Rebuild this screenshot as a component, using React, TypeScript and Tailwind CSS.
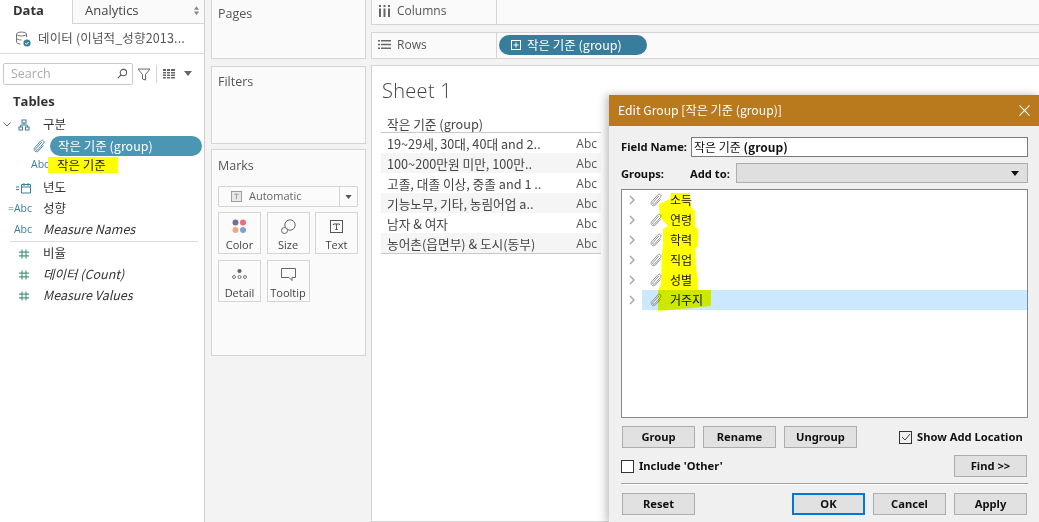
import React from "react";

const kr = "font-['Noto_Sans_CJK_KR','Noto_Sans',sans-serif]";
const LATIN = "font-['Open_Sans','Noto_Sans_CJK_KR',sans-serif]";
const DLG = "font-['Noto_Sans','Noto_Sans_CJK_KR',sans-serif]";

function Clip({ className = "", w = 1.1 }: { className?: string; w?: number }) {
  return (
    <svg viewBox="0 0 14 14" width="14" height="14" fill="none" stroke="currentColor" strokeWidth={w} className={className}>
      <path d="M9.8 3 4 9.6c-.9 1.1.5 2.5 1.5 1.5l6-6.8c1.6-1.9-1-4.2-2.7-2.4L2.7 8.7c-2 2.6 1.500 5.600 3.800 3.200l5-5.600" />
    </svg>
  );
}

function Hash() {
  return (
    <svg viewBox="0 0 12 12" width="12" height="12" stroke="#4f9a7d" strokeWidth="1.2" fill="none">
      <path d="M4 1.500v9M8 1.500v9M1 4.200h10M1 7.800h10" />
    </svg>
  );
}

function FieldRow({ icon, label, italic }: { icon: React.ReactNode; label: string; italic?: boolean }) {
  return (
    <div className="flex items-center h-[21px]">
      <div className="w-[33px] flex justify-end pr-[1px] text-[10.5px] text-[#3c7d9c]">{icon}</div>
      <span className={`ml-[10px] text-[12.5px] text-[#333] ${italic ? "italic" : ""}`}>{label}</span>
    </div>
  );
}

function MarkBtn({ label, children }: { label: string; children: React.ReactNode }) {
  return (
    <div className="w-[43px] h-[42px] border border-[#d4d4d4] bg-[#fbfbfb] flex flex-col items-center justify-between pt-[6px]">
      <div className="h-[15px] flex items-center justify-center">{children}</div>
      <span className="text-[11px] text-[#444] leading-[16px] whitespace-nowrap">{label}</span>
    </div>
  );
}

const RowsData = [
  "19~29세, 30대, 40대 and 2..",
  "100~200만원 미만, 100만..",
  "고졸, 대졸 이상, 중졸 and 1 ..",
  "기능노무, 기타, 농림어업 a..",
  "남자 & 여자",
  "농어촌(읍면부) & 도시(동부)",
];

const Groups = ["소득", "연령", "학력", "직업", "성별", "거주지"];

function DlgBtn({ label, cls = "" }: { label: string; cls?: string }) {
  return (
    <div className={`w-[73px] h-[22px] bg-[#e1e1e1] border border-[#adadad] flex items-center justify-center text-[11.2px] font-bold text-[#111] ${cls}`}>
      {label}
    </div>
  );
}

export default function App() {
  return (
    <div className={`relative w-[1039px] h-[522px] overflow-hidden flex bg-[#f3f3f3] ${LATIN}`}>
      {/* Sidebar */}
      <aside className="w-[205px] h-full shrink-0 bg-white border-r border-[#cfcfcf] flex flex-col">
        <div className="flex h-[24px] shrink-0">
          <div className="w-[72px] flex items-center pb-[2px] pl-[13px] text-[13px] font-bold text-[#333]">Data</div>
          <div className="flex-1 flex items-center justify-between pb-[2px] pl-[12px] pr-[4px] border-l border-b border-[#d4d4d4] bg-[#fafafa] text-[13px] text-[#444]">
            <span>Analytics</span>
            <svg viewBox="0 0 8 10" width="7" height="9" fill="#888"><path d="M4 0 7 4H1zM4 10 1 6h6z" /></svg>
          </div>
        </div>
        <div className="h-[30px] shrink-0 border-b border-[#dcdcdc] flex items-center pl-[14px]">
          <svg viewBox="0 0 18 18" width="18" height="18" fill="none" stroke="#777" strokeWidth="1">
            <ellipse cx="7.500" cy="4" rx="5" ry="2" />
            <path d="M2.500 4v8c0 1.100 2 2 4 2M12.500 4v3M2.500 8c0 1.100 2 2 5 2" />
            <circle cx="13" cy="13" r="3.600" fill="#3c7d9c" stroke="none" />
            <path d="m11.300 13 1.200 1.300 2.100-2.300" stroke="#fff" />
          </svg>
          <span className={`ml-[6px] text-[12.5px] text-[#555] tracking-[0.15px] whitespace-nowrap ${kr}`}>데이터 (이념적_성향2013...</span>
        </div>
        <div className="flex items-center mt-[8px] pl-[3px] h-[23px] shrink-0">
          <div className="w-[130px] h-[22px] border border-[#c9c9c9] rounded-[2px] flex items-center justify-between pl-[7px] pr-[4px] text-[12.5px] text-[#aaa]">
            <span className="pt-[1px]">Search</span>
            <svg viewBox="0 0 12 12" width="11" height="11" fill="none" stroke="#555" strokeWidth="1.100"><circle cx="7" cy="5" r="3.500" /><path d="M4.500 7.500 1 11" /></svg>
          </div>
          <svg viewBox="0 0 14 14" width="14" height="14" fill="none" stroke="#666" strokeWidth="1" className="ml-[4px]"><path d="M1 2h12L8.500 7.500V13L5.500 12V7.500z" /></svg>
          <div className="w-px h-[18px] bg-[#d4d4d4] ml-[5px]" />
          <svg viewBox="0 0 13 10" width="13" height="10" fill="#666" className="ml-[6px]">
            <path d="M0 0h3v2H0zM4 0h3v2H4zM8 0h4v2H8zM0 3h3v1.500H0zM4 3h3v1.500H4zM8 3h4v1.500H8zM0 5.500h3V7H0zM4 5.500h3V7H4zM8 5.500h4V7H8zM0 8h3v1.500H0zM4 8h3v1.500H4zM8 8h4v1.500H8z" />
          </svg>
          <svg viewBox="0 0 8 5" width="8" height="5" fill="#666" className="ml-[8px]"><path d="M0 0h8L4 5z" /></svg>
        </div>
        <div className="mt-[7px] pl-[13px] text-[13px] font-bold text-[#333] leading-[18px]">Tables</div>
        <div className={`mt-[4px] ${kr}`}>
          <div className="flex items-center h-[21px] relative">
            <svg viewBox="0 0 8 5" width="8" height="5" fill="none" stroke="#666" className="ml-[3px]"><path d="m.5.500 3.500 3.500 3.500-3.500" /></svg>
            <svg viewBox="0 0 12 12" width="12" height="12" fill="none" stroke="#3c7d9c" className="ml-[7px]"><rect x="4" y="1" width="4" height="3" /><rect x="1" y="8" width="3.500" height="3" /><rect x="7.500" y="8" width="3.500" height="3" /><path d="M6 4v2M2.700 8V6h6.600v2" /></svg>
            <span className="ml-[13px] text-[12.5px] text-[#333]">구분</span>
          </div>
          <div className="flex items-center h-[20px] mt-[1px]">
            <Clip className="ml-[32px] text-[#3c7d9c]" w={0.9} />
            <div className="ml-[4px] w-[152px] h-[20px] rounded-full bg-[#4b96b3] flex items-center pl-[8px] text-[12.5px] text-white whitespace-nowrap">작은 기준 (group)</div>
          </div>
          <div className="flex items-center h-[18px] mb-[3px]">
            <span className="ml-[31px] w-[15px] text-[10.5px] text-[#3c7d9c] font-['Open_Sans']">Abc</span>
            <span className="ml-[2px] w-[70px] h-[16px] bg-[#ffff00] pl-[9px] text-[12.5px] text-[#222] leading-[16px] whitespace-nowrap">작은 기준</span>
          </div>
          <FieldRow icon={<svg viewBox="0 0 16 12" width="16" height="12" fill="none" stroke="#3c7d9c"><path d="M0 5h3M0 7.500h3M5.500 2.500h9v8.500h-9zM5.500 5h9M8 1v3M12 1v3" /></svg>} label="년도" />
          <FieldRow icon={<span className="font-['Open_Sans'] whitespace-nowrap">=Abc</span>} label="성향" />
          <FieldRow icon={<span className="font-['Open_Sans']">Abc</span>} label="Measure Names" italic />
          <div className="h-px bg-[#dedede] ml-[10px] mr-[6px] mt-[1px] mb-[1px]" />
          <FieldRow icon={<span className="pr-[2px] flex"><Hash /></span>} label="비율" />
          <FieldRow icon={<span className="pr-[2px] flex"><Hash /></span>} label="데이터 (Count)" italic />
          <FieldRow icon={<span className="pr-[2px] flex"><Hash /></span>} label="Measure Values" italic />
        </div>
      </aside>

      {/* Cards column */}
      <div className="w-[166px] shrink-0 pl-[6px] pr-[5px] flex flex-col">
        <section className="h-[59px] border border-t-0 border-[#d4d4d4] bg-[#fafafa] pl-[6px] pt-[5px] text-[12.5px] text-[#555]">Pages</section>
        <section className="mt-[7px] h-[78px] border border-[#d4d4d4] bg-[#fafafa] pl-[6px] pt-[6px] text-[12.5px] text-[#555]">Filters</section>
        <section className="mt-[5px] h-[207px] border border-[#d4d4d4] bg-[#fafafa] pl-[6px] pt-[7px] text-[#555]">
          <div className="text-[12.5px] leading-[17px]">Marks</div>
          <div className="mt-[12px] w-[140px] h-[21px] border border-[#d4d4d4] flex items-center rounded-[1px] bg-[#fbfbfb]">
            <svg viewBox="0 0 12 12" width="11" height="11" fill="none" stroke="#999" className="ml-[12px]"><rect x="0.500" y="0.500" width="11" height="11" fill="#e8e8e8" /><path d="M3.500 3.500h5M6 3.500V9" /></svg>
            <span className="ml-[7px] flex-1 text-[11px] text-[#666]">Automatic</span>
            <div className="w-[18px] h-full border-l border-[#d4d4d4] flex items-center justify-center"><svg viewBox="0 0 8 5" width="7" height="4" fill="#555"><path d="M0 0h8L4 5z" /></svg></div>
          </div>
          <div className="mt-[5px] grid grid-cols-[43px_43px_43px] gap-x-[5.5px] gap-y-[6px]">
            <MarkBtn label="Color">
              <svg viewBox="0 0 15 15" width="15" height="15"><circle cx="3.500" cy="3.500" r="3" fill="#7c6a93" /><circle cx="11" cy="3.500" r="3" fill="#ef6a7c" /><circle cx="3.500" cy="11" r="3" fill="#f2a77c" /><circle cx="11" cy="11" r="3" fill="#7ba5cf" /></svg>
            </MarkBtn>
            <MarkBtn label="Size">
              <svg viewBox="0 0 15 15" width="15" height="15" fill="none" stroke="#666"><circle cx="9" cy="6" r="5.200" /><circle cx="3.500" cy="11.500" r="3" fill="#fbfbfb" /></svg>
            </MarkBtn>
            <MarkBtn label="Text">
              <svg viewBox="0 0 13 13" width="13" height="13" fill="none" stroke="#555"><rect x="0.500" y="0.500" width="12" height="12" /><path d="M3.500 4h6M6.500 4v5.500M5.200 9.500h2.600M3.500 4v1M9.500 4v1" /></svg>
            </MarkBtn>
            <MarkBtn label="Detail">
              <svg viewBox="0 0 15 11" width="15" height="11" fill="none" stroke="#666" strokeWidth="0.900"><circle cx="7.500" cy="2" r="1.700" fill="#666" /><circle cx="2" cy="8" r="1.500" /><circle cx="7.500" cy="8" r="1.500" /><circle cx="13" cy="8" r="1.500" /></svg>
            </MarkBtn>
            <MarkBtn label="Tooltip">
              <svg viewBox="0 0 15 13" width="15" height="13" fill="none" stroke="#666"><path d="M.5.500h14v9h-3.500v3l-3-3H.5z" /></svg>
            </MarkBtn>
          </div>
        </section>
      </div>

      {/* Main */}
      <main className="flex-1 flex flex-col min-w-0">
        <div className="h-[25px] shrink-0 border border-t-0 border-r-0 border-[#d4d4d4] bg-[#fafafa] flex">
          <div className="w-[125px] border-r border-[#d4d4d4] flex items-center pl-[7px] pb-[2px] text-[12px] text-[#555]">
            <svg viewBox="0 0 11 12" width="11" height="12" fill="#666"><path d="M0 0h2v2H0zM4.500 0h2v2h-2zM9 0h2v2H9zM0 3.500h2V12H0zM4.500 3.500h2V12h-2zM9 3.500h2V12H9z" /></svg>
            <span className="ml-[7px]">Columns</span>
          </div>
        </div>
        <div className="mt-[7px] h-[27px] shrink-0 border border-r-0 border-[#d4d4d4] bg-[#fafafa] flex">
          <div className="w-[125px] border-r border-[#d4d4d4] flex items-center pl-[6px] pb-[2px] text-[12px] text-[#555]">
            <svg viewBox="0 0 13 11" width="13" height="11" fill="#666"><path d="M0 1h2v1.500H0zM3 1h10v1.500H3zM0 4.700h2v1.500H0zM3 4.700h10v1.500H3zM0 8.500h2V10H0zM3 8.500h10V10H3z" /></svg>
            <span className="ml-[6px]">Rows</span>
          </div>
          <div className="pl-[2px] pb-[1px] flex items-center">
            <div className={`w-[148px] h-[20px] rounded-full bg-[#397d9d] flex items-center pl-[12px] text-[12.5px] text-white whitespace-nowrap ${kr}`}>
              <svg viewBox="0 0 10 10" width="10" height="10" fill="none" stroke="#fff"><rect x="0.500" y="0.500" width="9" height="9" /><path d="M5 2.500v5M2.500 5h5" /></svg>
              <span className="ml-[6px]">작은 기준 (group)</span>
            </div>
          </div>
        </div>
        <div className="mt-[6px] flex-1 border border-r-0 border-[#d4d4d4] bg-white pl-[9px]">
          <div className="mt-[12px] ml-[1px] text-[20px] leading-[26px] font-light text-[#444] tracking-[0.3px]">Sheet 1</div>
          <div className={`mt-[10px] w-[220px] ${kr}`}>
            <div className="h-[19px] flex items-center pl-[6px] pt-[2px] border-b border-[#c8c8c8] text-[12.7px] text-[#444]">작은 기준 (group)</div>
            {RowsData.map((r, i) => (
              <div key={r} className={`h-[20px] flex items-center justify-between pl-[6px] pr-[4px] pt-[1px] text-[12.7px] text-[#444] whitespace-nowrap ${i % 2 ? "bg-[#f5f5f5]" : "bg-white"}`}>
                <span>{r}</span>
                <span className="font-['Open_Sans'] text-[12px] text-[#555]">Abc</span>
              </div>
            ))}
            <div className="h-px bg-[#c8c8c8]" />
          </div>
        </div>
      </main>

      {/* Dialog */}
      <div className={`absolute left-[609px] top-[95px] w-[431px] h-[428px] bg-[#f0f0f0] shadow-[-3px_0_8px_rgba(0,0,0,0.25)] flex flex-col ${DLG}`}>
        <div className="h-[31px] shrink-0 bg-[#b87a1c] flex items-center justify-between pl-[9px] pr-[10px] text-[12.2px] text-white">
          <span className={kr}>Edit Group [작은 기준 (group)]</span>
          <svg viewBox="0 0 12 12" width="11" height="11" stroke="#fff" strokeWidth="1.100"><path d="m.5.500 11 11M11.500.5l-11 11" /></svg>
        </div>
        <div className="flex-1 pl-[12px] pr-[12px] flex flex-col text-[11.2px] font-bold text-[#111]">
          <div className="flex items-center mt-[11px] h-[20px]">
            <span className="w-[70px] pt-[1px]">Field Name:</span>
            <div className={`w-[337px] h-[20px] border border-[#7a7a7a] bg-white pl-[2px] flex items-center whitespace-nowrap text-[12px] ${kr}`}>
              <span className="font-normal">작은 기준&nbsp;</span><span>(group)</span>
            </div>
          </div>
          <div className="flex items-center mt-[6px] h-[20px]">
            <span className="w-[69px] pt-[3px]">Groups:</span>
            <span className="w-[46px] pt-[3px]">Add to:</span>
            <div className="w-[292px] h-[20px] border border-[#adadad] bg-[#dfdfdf] flex items-center justify-end pr-[8px]">
              <svg viewBox="0 0 8 5" width="8" height="5" fill="#111"><path d="M0 0h8L4 5z" /></svg>
            </div>
          </div>
          <div className={`relative mt-[6px] w-[407px] h-[229px] border border-[#828790] bg-white font-normal text-[12px] text-[#111] ${kr}`}>
            {Groups.map((g, i) => (
              <div key={g} className={`relative flex items-center h-[20px] ml-[20px] ${i === 5 ? "bg-[#cce8ff]" : ""}`}>
                <svg viewBox="0 0 6 10" width="6" height="10" fill="none" stroke="#a6a6a6" strokeWidth="1.500" className="absolute left-[-13px]"><path d="m1 1 4 4-4 4" /></svg>
                <Clip className="ml-[7px] text-[#8a8a8a]" w={0.9} />
                <span className="relative z-10 ml-[7px]">{g}</span>
              </div>
            ))}
            <svg viewBox="0 0 100 130" width="100" height="130" className="absolute left-[19px] top-[-1px] mix-blend-multiply pointer-events-none" fill="#ffff00">
              <path d="M30 4H48L50 18 54 22V37L57 40V57L54 60 55 77 57 92V101H70V117L41 120 17 122V102L20 95 21 62 22 58V40L27 37 19 28 18 15 29 10z" />
            </svg>
          </div>
          <div className="flex items-center mt-[8px] h-[22px] pl-[1px]">
            <DlgBtn label="Group" />
            <DlgBtn label="Rename" cls="ml-[8px]" />
            <DlgBtn label="Ungroup" cls="ml-[8px]" />
            <div className="ml-[42px] w-[13px] h-[13px] border border-[#333] flex items-center justify-center">
              <svg viewBox="0 0 10 10" width="10" height="10" fill="none" stroke="#444"><path d="m1 5 3 3 5-6" /></svg>
            </div>
            <span className="ml-[5px] whitespace-nowrap">Show Add Location</span>
          </div>
          <div className="flex items-center mt-[7px] h-[22px]">
            <div className="w-[13px] h-[13px] border border-[#333] bg-white" />
            <span className="ml-[5px] flex-1">Include 'Other'</span>
            <DlgBtn label="Find >>" cls="mr-[1px]" />
          </div>
          <div className="mt-[6px] h-[2px] border-t border-b border-t-[#a0a0a0] border-b-white w-[407px]" />
          <div className="flex items-center mt-[8px] h-[22px] pl-[1px]">
            <DlgBtn label="Reset" />
            <DlgBtn label="OK" cls="ml-[97px] !border-2 !border-[#0078d7]" />
            <DlgBtn label="Cancel" cls="ml-[8px]" />
            <DlgBtn label="Apply" cls="ml-[8px]" />
          </div>
        </div>
      </div>
    </div>
  );
}
